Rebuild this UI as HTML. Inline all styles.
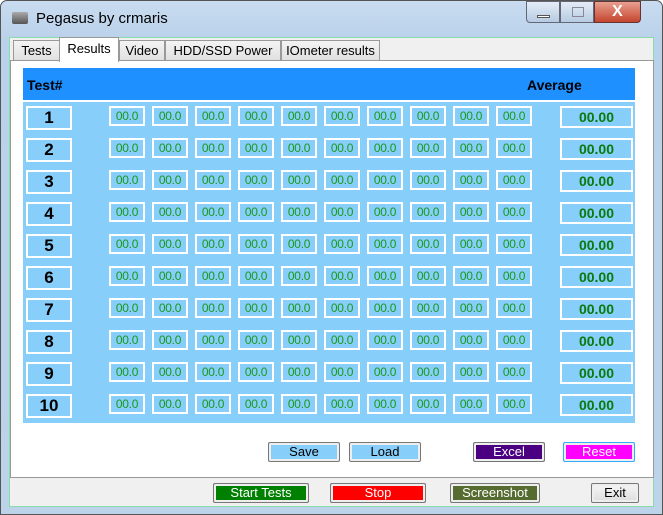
<!DOCTYPE html>
<html><head><style>
*{box-sizing:border-box;margin:0;padding:0}
body{width:663px;height:515px;position:relative;overflow:hidden;font-family:"Liberation Sans",sans-serif;background:#fff}
.a{position:absolute}
.win{left:0;top:0;width:663px;height:515px;border:1px solid #555;border-radius:7px 7px 0 0;background:linear-gradient(#c9dcf0,#b9d1ea 40px,#bcd3ea)}
.tab{top:40px;height:21px;border:1px solid #999;background:linear-gradient(#f4f4f4,#e0e0e0);font-size:13px;text-align:center;line-height:19px}
.cell{border:2px solid #fff;background:#87cefa;color:#1a9a1a;font-size:12px;text-align:center;line-height:16px;height:20px;width:36px;letter-spacing:-0.3px}
.num{border:2px solid #fff;background:#87cefa;font-weight:bold;font-size:17px;text-align:center;line-height:20px;width:46px;height:24px}
.avg{border:2px solid #fff;background:#87cefa;color:#0a7a0a;font-weight:bold;font-size:14px;text-align:center;line-height:18px;width:73px;height:22px}
.btn{height:20px;border:1px solid #777;border-radius:2px;font-size:13px;text-align:center;line-height:18px;box-shadow:inset 0 0 0 2px #eee}
</style></head><body>
<div class="a win"></div>
<div class="a" style="left:12px;top:12px;width:16px;height:12px;background:linear-gradient(#aaa,#555);border-radius:2px"></div>
<div class="a" style="left:36px;top:10px;font-size:15px">Pegasus by crmaris</div>
<div class="a" style="left:526px;top:1px;width:34px;height:22px;border:1px solid #667;border-radius:0 0 0 4px;background:linear-gradient(#e4edf7,#b6cbe2)"><div class="a" style="left:10px;top:13px;width:13px;height:3px;background:#fff;border:1px solid #555"></div></div>
<div class="a" style="left:560px;top:1px;width:34px;height:22px;border:1px solid #667;background:linear-gradient(#e4edf7,#b6cbe2)"><div class="a" style="left:11px;top:5px;width:12px;height:10px;border:1px solid #889"></div></div>
<div class="a" style="left:594px;top:1px;width:47px;height:22px;border:1px solid #633;border-radius:0 0 4px 0;background:linear-gradient(#e8a090,#c4452e);color:#fff;font-weight:bold;font-size:16px;text-align:center;line-height:20px">X</div>
<div class="a" style="left:9px;top:37px;width:645px;height:470px;background:#f0f0f0;border:1px solid #8da"></div>
<div class="a" style="left:10px;top:60px;width:644px;height:418px;background:#fff;border:1px solid #999"></div>
<div class="a tab" style="left:13px;width:47px">Tests</div>
<div class="a tab" style="left:119px;width:46px">Video</div>
<div class="a tab" style="left:165px;width:116px">HDD/SSD Power</div>
<div class="a tab" style="left:281px;width:99px">IOmeter results</div>
<div class="a tab" style="left:59px;top:37px;height:25px;width:60px;background:#fff;border-bottom:none;line-height:21px">Results</div>
<div class="a" style="left:23px;top:68px;width:612px;height:32px;background:#1e90ff"></div>
<div class="a" style="left:27px;top:77px;font-weight:bold;font-size:14px">Test#</div>
<div class="a" style="left:527px;top:77px;font-weight:bold;font-size:14px">Average</div>
<div class="a" style="left:23px;top:100px;width:612px;height:323px;background:#87cefa;border-top:2px solid #fff"></div>
<div id="rows"></div>
<script>
var h='';for(var r=0;r<10;r++){var y=106+r*32;
h+='<div class="a num" style="left:26px;top:'+y+'px">'+(r+1)+'</div>';
for(var c=0;c<10;c++)h+='<div class="a cell" style="left:'+(109+c*43)+'px;top:'+(y)+'px">00.0</div>';
h+='<div class="a avg" style="left:560px;top:'+y+'px">00.00</div>';}
document.getElementById('rows').innerHTML=h;
</script>
<div class="a btn" style="left:268px;top:442px;width:72px;background:#87cefa">Save</div>
<div class="a btn" style="left:349px;top:442px;width:72px;background:#87cefa">Load</div>
<div class="a btn" style="left:473px;top:442px;width:72px;background:#4b0082;color:#fff">Excel</div>
<div class="a btn" style="left:563px;top:442px;width:72px;background:#ff00ff;color:#fff;border-color:#3af">Reset</div>
<div class="a btn" style="left:213px;top:483px;width:96px;background:#008000;color:#fff">Start Tests</div>
<div class="a btn" style="left:330px;top:483px;width:96px;background:#ff0000;color:#fff">Stop</div>
<div class="a btn" style="left:450px;top:483px;width:90px;background:#556b2f;color:#fff">Screenshot</div>
<div class="a btn" style="left:591px;top:483px;width:48px;background:linear-gradient(#f6f6f6,#ddd)">Exit</div>
</body></html>
